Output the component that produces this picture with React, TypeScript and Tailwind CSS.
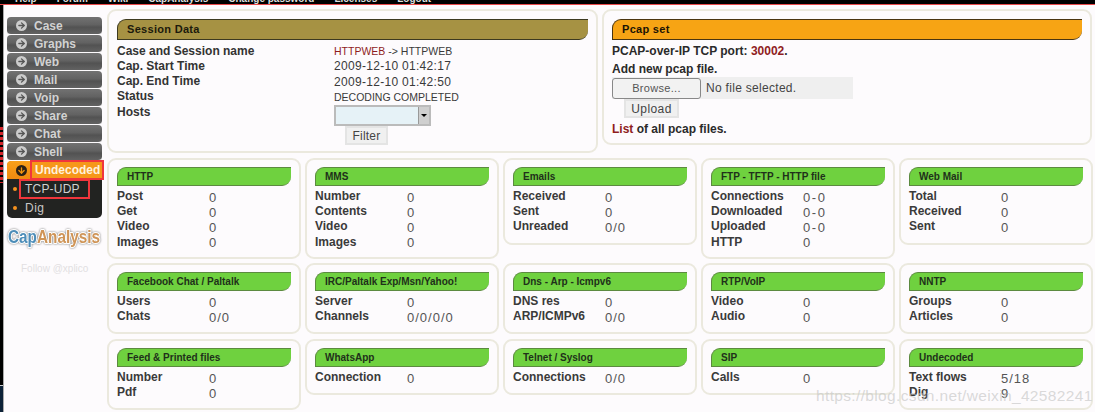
import { ArrowRight, ArrowDown } from "lucide-react";

const font = "font-['Liberation_Sans',Arial,sans-serif]";

const menu = ["Help", "Forum", "Wiki", "CapAnalysis", "Change password", "Licenses", "Logout"];
const navItems = ["Case", "Graphs", "Web", "Mail", "Voip", "Share", "Chat", "Shell"];

type Card = {
  title: string;
  rows: [string, string][];
  className: string;
};

const cards: Card[] = [
  { title: "HTTP", rows: [["Post", "0"], ["Get", "0"], ["Video", "0"], ["Images", "0"]], className: "h-[101px]" },
  { title: "MMS", rows: [["Number", "0"], ["Contents", "0"], ["Video", "0"], ["Images", "0"]], className: "h-[101px]" },
  { title: "Emails", rows: [["Received", "0"], ["Sent", "0"], ["Unreaded", "0/0"]], className: "h-[87px]" },
  { title: "FTP - TFTP - HTTP file", rows: [["Connections", "0 - 0"], ["Downloaded", "0 - 0"], ["Uploaded", "0 - 0"], ["HTTP", "0"]], className: "h-[101px]" },
  { title: "Web Mail", rows: [["Total", "0"], ["Received", "0"], ["Sent", "0"]], className: "h-[87px]" },
  { title: "Facebook Chat / Paltalk", rows: [["Users", "0"], ["Chats", "0/0"]], className: "h-[71px]" },
  { title: "IRC/Paltalk Exp/Msn/Yahoo!", rows: [["Server", "0"], ["Channels", "0/0/0/0"]], className: "h-[71px]" },
  { title: "Dns - Arp - Icmpv6", rows: [["DNS res", "0"], ["ARP/ICMPv6", "0/0"]], className: "h-[71px]" },
  { title: "RTP/VoIP", rows: [["Video", "0"], ["Audio", "0"]], className: "h-[71px]" },
  { title: "NNTP", rows: [["Groups", "0"], ["Articles", "0"]], className: "h-[71px]" },
  { title: "Feed & Printed files", rows: [["Number", "0"], ["Pdf", "0"]], className: "h-[71px]" },
  { title: "WhatsApp", rows: [["Connection", "0"]], className: "h-[56px]" },
  { title: "Telnet / Syslog", rows: [["Connections", "0/0"]], className: "h-[56px]" },
  { title: "SIP", rows: [["Calls", "0"]], className: "h-[56px]" },
  { title: "Undecoded", rows: [["Text flows", "5/18"], ["Dig", "9"]], className: "h-[71px]" },
];

const StatCard = ({ title, rows, className }: Card) => (
  <div className={`rounded-[9px] border-2 border-[#ebe9de] px-[8px] pt-[7px] ${className}`}>
    <div className="flex h-[19px] items-center rounded-tl-[9px] rounded-br-[9px] border-t border-l border-b border-[#5c8a40] bg-[#6fd13f] pl-[9px] text-[10px] font-bold text-[#20301a]">
      {title}
    </div>
    <div className="mt-[3px]">
      {rows.map(([label, value]) => (
        <div key={label} className="flex h-[15.2px] items-center text-[12px] leading-[15px]">
          <span className="w-[92px] font-bold text-[#3a3a3a]">{label}</span>
          <span className="pt-[1px] text-[13px] tracking-[1px] text-[#555] [word-spacing:-4px]">{value}</span>
        </div>
      ))}
    </div>
  </div>
);

const SessionRow = ({ label, children }: { label: string; children: React.ReactNode }) => (
  <div className="flex h-[15.25px] items-center text-[12px]">
    <span className="w-[217px] font-bold text-[#333]">{label}</span>
    <span className="pt-[1px] tracking-[0.3px] text-[#3a3a3a]">{children}</span>
  </div>
);

const App = () => {
  return (
    <div className={`${font} relative flex h-[412px] w-[1095px] flex-col overflow-hidden bg-[#fdfbfd]`}>
      {/* Top menu, cut by the screenshot */}
      <div className="h-[5px] shrink-0 overflow-hidden border-b border-[#e8494a] bg-black">
        <div className="-mt-[8px] flex h-[12px] items-center gap-[20px] pl-[15px] text-[10px] font-bold text-[#ddd]">
          {menu.map((item) => (
            <span key={item}>{item}</span>
          ))}
        </div>
      </div>

      <div className="flex min-h-0 flex-1">
        {/* Edge of the window behind */}
        <div className="flex w-[4px] shrink-0 flex-col border-r border-[#aaa] bg-black">
          <div className="mt-[120px] h-[58px] bg-[repeating-linear-gradient(#000_0px,#000_2px,#d3262b_2px,#d3262b_5px)]" />
          <div className="mt-auto h-[1px] bg-[#ccc]" />
          <div className="h-[26px] bg-[#0d2238]" />
        </div>

        {/* Sidebar */}
        <div className="w-[99px] shrink-0 pl-[3px] pr-[1px] pt-[12px]">
          <div className="flex flex-col">
            {navItems.map((item) => (
              <div
                key={item}
                className="flex h-[18px] items-center gap-[7px] rounded-[4px] border-b border-[#fdfbfd] bg-[linear-gradient(#727272_0%,#626262_45%,#525252_60%,#626262_100%)] pl-[9px] text-[12px] font-bold text-[#d2d2d2]"
              >
                <span className="flex size-[11px] items-center justify-center rounded-full bg-[#cccccc]">
                  <ArrowRight size={9} strokeWidth={3.5} className="text-[#555]" />
                </span>
                {item}
              </div>
            ))}
            <div className="rounded-[5px] bg-[#222321]">
              <div className="relative flex h-[18px] items-center rounded-t-[4px] bg-[linear-gradient(#f9a01a,#ef8a10)] pl-[9px]">
                <span className="flex size-[11px] items-center justify-center rounded-full bg-[#2b2016]">
                  <ArrowDown size={9} strokeWidth={3.5} className="text-[#f2960f]" />
                </span>
                <span className="absolute left-[23px] top-[-1px] flex h-[20px] w-[74px] items-center border-[2px] border-[#f0363c] bg-[#f6971a] pl-[3px] text-[12px] font-bold text-[#fff1dc]">
                  Undecoded
                </span>
              </div>
              <div className="flex h-[19px] items-center pl-[6px] text-[12px] tracking-[0.2px] text-[#d0d0d0]">
                <span className="size-[4px] rounded-full bg-[#f6921e]" />
                <span className="ml-[2px] flex h-[20px] w-[71px] items-center border-[2px] border-[#f0363c] pl-[4px]">TCP-UDP</span>
              </div>
              <div className="flex h-[20px] items-center pl-[6px] text-[12px] tracking-[0.5px] text-[#c8c8c8]">
                <span className="size-[4px] rounded-full bg-[#f6921e]" />
                <span className="ml-[8px]">Dig</span>
              </div>
            </div>
          </div>

          {/* Logo */}
          <svg width="95" height="24" viewBox="0 0 95 24" className="mt-[7px] block [filter:drop-shadow(0_0_1px_#777)]">
            <text
              x="1"
              y="18"
              fontSize="18"
              fontWeight="bold"
              fontFamily="'Liberation Sans', Arial, sans-serif"
              stroke="#fff"
              strokeWidth="2.2"
              strokeLinejoin="round"
              paintOrder="stroke"
              textLength="92"
              lengthAdjust="spacingAndGlyphs"
            >
              <tspan fill="#4d8db8">Cap</tspan>
              <tspan fill="#cf9457">Analysis</tspan>
            </text>
          </svg>
          <div className="mt-[12px] pl-[14px] text-[10px] text-[#e2dfe2]">Follow @xplico</div>
        </div>

        {/* Main */}
        <div className="min-w-0 flex-1 pl-[4px] pt-[4px]">
          <div className="flex items-start gap-[4px]">
            <div className="h-[144px] w-[491px] rounded-[9px] border-2 border-[#ebe9de] px-[8px] pt-[8px]">
              <div className="flex h-[21px] items-center rounded-tl-[9px] rounded-br-[9px] border-t border-l border-b border-[#3d3a20] bg-[#a69243] pl-[9px] text-[11px] font-bold tracking-[0.3px] text-[#1c1a0c]">
                Session Data
              </div>
              <div className="mt-[3px]">
                <SessionRow label="Case and Session name">
                  <span className="text-[10.5px] tracking-[0px]">
                    <span className="text-[#8f1d1d]">HTTPWEB</span> -&gt; HTTPWEB
                  </span>
                </SessionRow>
                <SessionRow label="Cap. Start Time">2009-12-10 01:42:17</SessionRow>
                <SessionRow label="Cap. End Time">2009-12-10 01:42:50</SessionRow>
                <SessionRow label="Status">
                  <span className="text-[10.5px] tracking-[0px]">DECODING COMPLETED</span>
                </SessionRow>
                <SessionRow label="Hosts">
                  <span />
                </SessionRow>
              </div>
              <div className="-mt-[14px] ml-[217px] flex h-[21px] w-[97px] border-2 border-[#bbb] bg-[#e6f2f7]">
                <div className="ml-auto flex w-[11px] items-center justify-center border-l border-[#999] bg-[#cfcfcf]">
                  <span className="border-x-[3px] border-t-[3px] border-x-transparent border-t-black" />
                </div>
              </div>
              <div className="ml-[228px] flex h-[19px] w-[43px] items-center justify-center border-2 border-[#e4e4e4] bg-[#f0f0f0] text-[12px] tracking-[0.2px] text-[#444]">
                Filter
              </div>
            </div>

            <div className="h-[136px] w-[490px] rounded-[9px] border-2 border-[#ebe9de] px-[8px] pt-[8px]">
              <div className="flex h-[21px] items-center rounded-tl-[9px] rounded-br-[9px] border-t border-l border-b border-[#4a3510] bg-[#f7a414] pl-[9px] text-[11px] font-bold tracking-[0.3px] text-[#1c1404]">
                Pcap set
              </div>
              <div className="mt-[2px] h-[18px] text-[12px] font-bold leading-[18px] text-[#2a2a2a]">
                PCAP-over-IP TCP port: <span className="text-[#8f1d1d]">30002</span>.
              </div>
              <div className="h-[17px] text-[12px] font-bold leading-[18px] text-[#2a2a2a]">Add new pcap file.</div>
              <div className="flex h-[22px] w-[241px] items-center bg-[#efefef] text-[12px] tracking-[0.3px] text-[#444]">
                <div className="flex h-[21px] w-[89px] items-center justify-center rounded-[3px] border border-[#888] bg-[#f2f2f2] text-[11px] text-[#555]">Browse...</div>
                <span className="ml-[5px]">No file selected.</span>
              </div>
              <div className="ml-[12px] flex h-[19px] w-[55px] items-center justify-center border-2 border-[#e4e4e4] bg-[#f0f0f0] text-[12px] tracking-[0.4px] text-[#444]">
                Upload
              </div>
              <div className="mt-[4px] text-[12px] font-bold leading-[15px] text-[#2a2a2a]">
                <span className="text-[#8f1d1d]">List</span> of all pcap files.
              </div>
            </div>
          </div>

          {/* Stat cards */}
          <div className="mt-[5px] grid w-[986px] grid-cols-[repeat(5,194px)] grid-rows-[101px_72px_71px] items-start gap-x-[4px] gap-y-[4px]">
            {cards.map((card) => (
              <StatCard key={card.title} {...card} />
            ))}
          </div>
        </div>
      </div>

      {/* Watermark */}
      <div className="absolute left-[816px] top-[384px] text-[15.5px] tracking-[0.35px] text-[#c9c9c9]/70">
        https://blog.csdn.net/weixin_42582241
      </div>
    </div>
  );
};

export default App;
